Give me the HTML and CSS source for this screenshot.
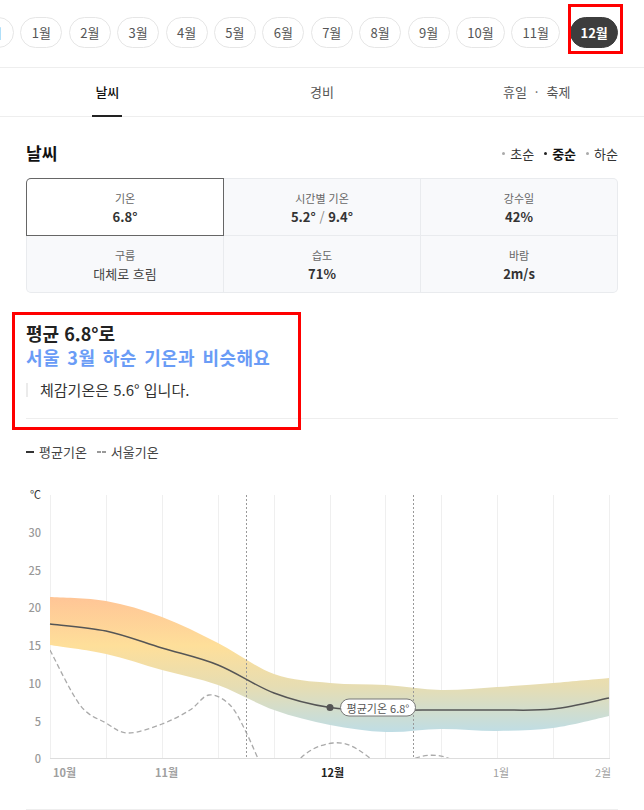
FILE: index.html
```html
<!DOCTYPE html>
<html lang="ko">
<head>
<meta charset="utf-8">
<title>날씨</title>
<link rel="stylesheet" href="styles.css">
</head>
<body>
<div class="page">
  <div class="months">
    <div class="month-track">
      <span class="pill pill-wide">전체</span>
      <span class="pill">1월</span>
      <span class="pill">2월</span>
      <span class="pill">3월</span>
      <span class="pill">4월</span>
      <span class="pill">5월</span>
      <span class="pill">6월</span>
      <span class="pill">7월</span>
      <span class="pill">8월</span>
      <span class="pill">9월</span>
      <span class="pill pill-wide">10월</span>
      <span class="pill pill-wide">11월</span>
      <span class="pill pill-active">12월</span>
    </div>
  </div>

  <nav class="tabs">
    <div class="tab"><span class="tab-label tab-active">날씨</span></div>
    <div class="tab"><span class="tab-label">경비</span></div>
    <div class="tab"><span class="tab-label">휴일<span class="tab-sep">·</span>축제</span></div>
  </nav>

  <section class="weather">
    <div class="weather-head">
      <h2 class="title">날씨</h2>
      <ul class="periods">
        <li class="period">초순</li>
        <li class="period period-active">중순</li>
        <li class="period">하순</li>
      </ul>
    </div>

    <div class="stats">
      <div class="stat stat-active"><div class="stat-label">기온</div><div class="stat-value">6.8°</div></div>
      <div class="stat"><div class="stat-label">시간별 기온</div><div class="stat-value">5.2° <span class="slash">/</span> 9.4°</div></div>
      <div class="stat"><div class="stat-label">강수일</div><div class="stat-value">42%</div></div>
      <div class="stat"><div class="stat-label">구름</div><div class="stat-value stat-value-text">대체로 흐림</div></div>
      <div class="stat"><div class="stat-label">습도</div><div class="stat-value">71%</div></div>
      <div class="stat"><div class="stat-label">바람</div><div class="stat-value">2m/s</div></div>
    </div>

    <div class="summary">
      <p class="avg">평균 6.8°로</p>
      <p class="compare">서울 3월 하순 기온과 비슷해요</p>
      <p class="feel">체감기온은 5.6° 입니다.</p>
    </div>

    <div class="divider"></div>

    <div class="legend">
      <span class="legend-item"><span class="swatch swatch-avg"></span>평균기온</span>
      <span class="legend-item"><span class="swatch swatch-seoul"></span>서울기온</span>
    </div>
  </section>

  <svg class="chart" viewBox="0 480 644 320" width="644" height="320" xmlns="http://www.w3.org/2000/svg">
    <defs>
      <linearGradient id="band" gradientUnits="userSpaceOnUse" x1="0" y1="597" x2="0" y2="733">
        <stop offset="0" stop-color="#ffc596"/>
        <stop offset="0.36" stop-color="#fedf9a"/>
        <stop offset="0.66" stop-color="#e6ddb3"/>
        <stop offset="1" stop-color="#bedde6"/>
      </linearGradient>
      <clipPath id="plot">
        <rect x="50" y="490" width="560" height="268"/>
      </clipPath>
    </defs>

    <g class="grid">
      <line x1="50.5" y1="495" x2="50.5" y2="758"/>
      <line x1="106.5" y1="495" x2="106.5" y2="758"/>
      <line x1="162.5" y1="495" x2="162.5" y2="758"/>
      <line x1="218.5" y1="495" x2="218.5" y2="758"/>
      <line x1="274.5" y1="495" x2="274.5" y2="758"/>
      <line x1="330.5" y1="495" x2="330.5" y2="758"/>
      <line x1="385.5" y1="495" x2="385.5" y2="758"/>
      <line x1="441.5" y1="495" x2="441.5" y2="758"/>
      <line x1="497.5" y1="495" x2="497.5" y2="758"/>
      <line x1="553.5" y1="495" x2="553.5" y2="758"/>
      <line x1="609.5" y1="495" x2="609.5" y2="758"/>
    </g>
    <line class="baseline" x1="50" y1="758.5" x2="610" y2="758.5"/>

    <text class="unit" x="41" y="494">℃</text>
    <g class="axis-y">
      <text x="41" y="532">30</text>
      <text x="41" y="570">25</text>
      <text x="41" y="607">20</text>
      <text x="41" y="645">15</text>
      <text x="41" y="683">10</text>
      <text x="41" y="721">5</text>
      <text x="41" y="758">0</text>
    </g>

    <path fill="url(#band)" d="M50 597 C59.3 597.7, 87.3 597.7, 106 601 C124.7 604.3, 143.3 610, 162 617 C180.7 624, 199.3 633.5, 218 643 C236.7 652.5, 255.3 667.3, 274 674 C292.7 680.7, 311.3 681.2, 330 683 C348.7 684.8, 367.5 683.8, 386 685 C404.5 686.2, 422.5 689.7, 441 690 C459.5 690.3, 478.3 688.2, 497 687 C515.7 685.8, 534.3 684.5, 553 683 C571.7 681.5, 599.7 678.8, 609 678 L609 716 C599.7 718, 571.7 725.5, 553 728 C534.3 730.5, 515.7 730.8, 497 731 C478.3 731.2, 459.5 728.8, 441 729 C422.5 729.2, 404.5 732.7, 386 732 C367.5 731.3, 348.7 728.7, 330 725 C311.3 721.3, 292.7 716.7, 274 710 C255.3 703.3, 236.7 691.7, 218 685 C199.3 678.3, 180.7 675.2, 162 670 C143.3 664.8, 124.7 658.2, 106 654 C87.3 649.8, 59.3 646.5, 50 645 Z"/>

    <g class="seoul" clip-path="url(#plot)">
      <path d="M50 650 C55 659.2, 70.7 692.8, 80 705 C89.3 717.2, 98 718.3, 106 723 C114 727.7, 118.7 732.8, 128 733 C137.3 733.2, 151.7 727.8, 162 724 C172.3 720.2, 182.2 714.8, 190 710 C197.8 705.2, 202.3 695.8, 209 695 C215.7 694.2, 223.8 698.8, 230 705 C236.2 711.2, 240.7 721.5, 246 732 C251.3 742.5, 259.3 762, 262 768"/>
      <path d="M290 770 C300 758, 310 746, 333 743 C350 741, 362 752, 380 766"/>
      <path d="M408 762 C420 754, 440 752, 456 762"/>
    </g>

    <line class="marker" x1="246.5" y1="495" x2="246.5" y2="758"/>
    <line class="marker" x1="413.5" y1="495" x2="413.5" y2="758"/>

    <path class="mean" d="M50 624 C59.3 625.2, 87.3 627, 106 631 C124.7 635, 143.3 642.3, 162 648 C180.7 653.7, 199.3 657.5, 218 665 C236.7 672.5, 255.3 685.9, 274 693 C292.7 700.1, 311.3 704.7, 330 707.5 C348.7 710.3, 367.5 709.6, 386 710 C404.5 710.4, 422.5 710, 441 710 C459.5 710, 478.3 710.2, 497 710 C515.7 709.8, 534.3 711, 553 709 C571.7 707, 599.7 699.8, 609 698"/>

    <circle class="dot" cx="330" cy="707.5" r="3.5"/>
    <rect class="tag" x="340.5" y="699" width="75" height="17" rx="8.5"/>
    <text class="tag-text" x="378" y="708">평균기온 6.8°</text>

    <g class="axis-x">
      <text x="53" y="772">10월</text>
      <text x="155" y="772">11월</text>
      <text class="axis-x-current" x="321" y="772">12월</text>
      <text class="axis-x-light" x="493" y="772">1월</text>
      <text class="axis-x-light" x="595" y="772">2월</text>
    </g>
  </svg>

  <div class="bottom-rule"></div>

  <div class="mark mark-month"></div>
  <div class="mark mark-summary"></div>
</div>
</body>
</html>
```

FILE: styles.css
```css
* {
  box-sizing: border-box;
}

body {
  margin: 0;
  background: #fff;
  color: #222;
  font-family: "Noto Sans CJK KR", "Noto Sans", "Liberation Sans", sans-serif;
}

.page {
  position: relative;
  width: 644px;
}

/* month pills */
.months {
  height: 68px;
  border-bottom: 1px solid #eee;
  overflow: hidden;
}

.month-track {
  display: flex;
  gap: 6.4px;
  padding-top: 17px;
  margin-left: -35px;
}

.pill {
  flex: none;
  width: 42px;
  height: 31px;
  border: 1px solid #e6e6e6;
  border-radius: 16px;
  font-size: 13px;
  line-height: 29px;
  color: #555;
  text-align: center;
  white-space: nowrap;
}

.pill-wide {
  width: 49px;
}

.pill-active {
  width: 48px;
  margin-left: 3.5px;
  background: #3d3d3d;
  border-color: #3d3d3d;
  color: #fff;
  font-weight: 700;
}

/* tabs */
.tabs {
  display: flex;
  height: 49px;
  border-bottom: 1px solid #eee;
}

.tab {
  flex: 1;
  display: flex;
  justify-content: center;
  align-items: center;
  font-size: 13px;
  color: #555;
}

.tab-label {
  position: relative;
  padding: 0 3px;
  line-height: 48px;
}

.tab-active {
  color: #111;
  font-weight: 500;
}

.tab-active::after {
  content: "";
  position: absolute;
  left: 0;
  right: 0;
  bottom: -1px;
  height: 2px;
  background: #222;
}

.tab-sep {
  margin: 0 8px;
  color: #666;
}

/* weather section */
.weather {
  padding: 0 26px;
}

.weather-head {
  display: flex;
  justify-content: space-between;
  align-items: center;
  height: 24px;
  margin-top: 24px;
}

.title {
  margin: 0;
  font-size: 17px;
  font-weight: 700;
  line-height: 24px;
  color: #111;
}

.periods {
  display: flex;
  gap: 10px;
  margin: 0;
  padding: 0;
  list-style: none;
  font-size: 13px;
  color: #333;
}

.period {
  display: flex;
  align-items: center;
  gap: 5px;
}

.period::before {
  content: "";
  width: 3px;
  height: 3px;
  border-radius: 50%;
  background: #aaa;
}

.period-active {
  font-weight: 700;
  color: #111;
}

.period-active::before {
  background: #222;
}

.stats {
  display: grid;
  grid-template-columns: repeat(3, 1fr);
  gap: 1px;
  margin-top: 13px;
  padding: 1px;
  background: #e9ebee;
  border-radius: 5px;
}

.stat {
  height: 56px;
  padding-top: 10px;
  background: #f8f9fb;
  text-align: center;
}

.stat:nth-child(3) {
  border-top-right-radius: 4px;
}

.stat:nth-child(4) {
  border-bottom-left-radius: 4px;
}

.stat:nth-child(6) {
  border-bottom-right-radius: 4px;
}

.stat-active {
  position: relative;
  background: #fff;
  box-shadow: 0 0 0 1px #666;
  border-top-left-radius: 4px;
}

.stat-label {
  font-size: 11px;
  line-height: 18px;
  color: #666;
}

.stat-value {
  font-size: 13px;
  font-weight: 700;
  line-height: 19px;
  color: #333;
}

.stat-value-text {
  font-weight: 400;
  color: #444;
}

.slash {
  font-weight: 400;
  color: #888;
}

.summary {
  margin-top: 28px;
}

.avg,
.compare {
  margin: 0;
  font-size: 18px;
  font-weight: 700;
  line-height: 24px;
}

.avg {
  color: #222;
}

.compare {
  color: #6a9cf6;
  word-spacing: 2px;
  letter-spacing: 0.4px;
}

.feel {
  margin: 14px 0 0;
  padding-left: 12px;
  border-left: 2px solid #ebebeb;
  font-size: 15px;
  line-height: 14px;
  color: #333;
}

.divider {
  height: 1px;
  margin-top: 21px;
  background: #eee;
}

.legend {
  display: flex;
  gap: 10px;
  margin-top: 23px;
  font-size: 13px;
  line-height: 20px;
  color: #444;
}

.legend-item {
  display: flex;
  align-items: center;
  gap: 5px;
}

.swatch {
  display: block;
  height: 2px;
}

.swatch-avg {
  width: 8px;
  background: #333;
}

.swatch-seoul {
  width: 9px;
  background: repeating-linear-gradient(90deg, #999 0 4px, transparent 4px 5px);
}

/* chart */
.chart {
  display: block;
  margin-top: 18px;
  font-family: "Noto Sans CJK KR", "Noto Sans", "Liberation Sans", sans-serif;
}

.grid line {
  stroke: #efefef;
  stroke-width: 1;
}

.baseline {
  stroke: #ddd;
  stroke-width: 1;
}

.unit {
  font-size: 11px;
  fill: #333;
  text-anchor: end;
  dominant-baseline: central;
}

.axis-y text {
  font-size: 11px;
  font-weight: 500;
  fill: #999;
  text-anchor: end;
  dominant-baseline: central;
}

.seoul path {
  fill: none;
  stroke: #aaa;
  stroke-width: 1.3;
  stroke-dasharray: 5 3;
}

.marker {
  stroke: #999;
  stroke-width: 1;
  stroke-dasharray: 2 2;
}

.mean {
  fill: none;
  stroke: #555;
  stroke-width: 1.5;
}

.dot {
  fill: #555;
}

.tag {
  fill: #fff;
  stroke: #777;
  stroke-width: 1;
}

.tag-text {
  font-size: 11px;
  fill: #555;
  text-anchor: middle;
  dominant-baseline: central;
}

.axis-x text {
  font-size: 11px;
  font-weight: 700;
  fill: #a0a0a0;
  dominant-baseline: central;
}

.axis-x .axis-x-current {
  fill: #222;
}

.axis-x .axis-x-light {
  font-weight: 400;
}

.bottom-rule {
  height: 1px;
  margin: 9px 26px 0;
  background: #eee;
}

/* annotation marks */
.mark {
  position: absolute;
  border: 3px solid #f00;
}

.mark-month {
  left: 568px;
  top: 4px;
  width: 55px;
  height: 50px;
}

.mark-summary {
  left: 12px;
  top: 312px;
  width: 289px;
  height: 118px;
}
```
